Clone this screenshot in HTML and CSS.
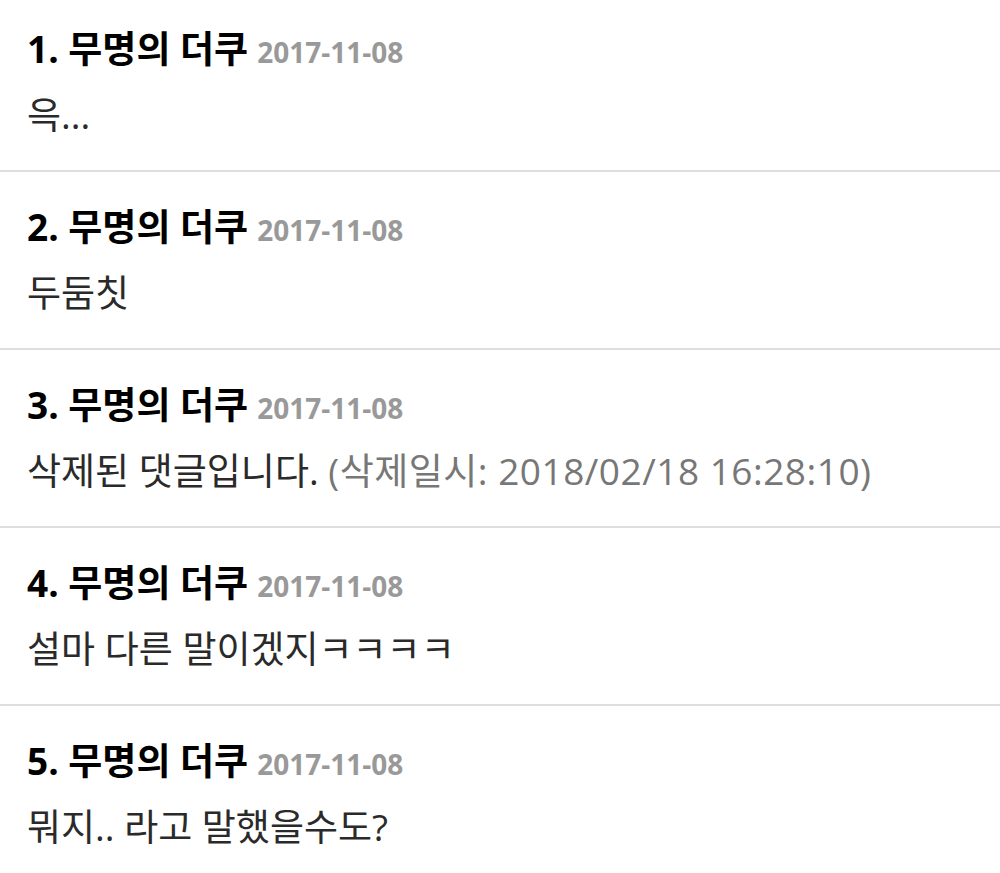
FILE: index.html
```html
<!DOCTYPE html>
<html lang="ko">
<head>
    <meta charset="UTF-8">
    <meta name="viewport" content="width=device-width, initial-scale=1.0">
    <title>댓글</title>
    <link rel="stylesheet" href="styles.css">
</head>
<body>
    <ul class="comments">
        <li class="comment">
            <div class="comment-head"><span class="nick">1. 무명의 더쿠</span><span class="date">2017-11-08</span></div>
            <p class="comment-body">윽...</p>
        </li>
        <li class="comment">
            <div class="comment-head"><span class="nick">2. 무명의 더쿠</span><span class="date">2017-11-08</span></div>
            <p class="comment-body">두둠칫</p>
        </li>
        <li class="comment">
            <div class="comment-head"><span class="nick">3. 무명의 더쿠</span><span class="date">2017-11-08</span></div>
            <p class="comment-body">삭제된 댓글입니다. <span class="deleted">(삭제일시: 2018/02/18 16:28:10)</span></p>
        </li>
        <li class="comment">
            <div class="comment-head"><span class="nick">4. 무명의 더쿠</span><span class="date">2017-11-08</span></div>
            <p class="comment-body">설마 다른 말이겠지ㅋㅋㅋㅋ</p>
        </li>
        <li class="comment">
            <div class="comment-head"><span class="nick">5. 무명의 더쿠</span><span class="date">2017-11-08</span></div>
            <p class="comment-body">뭐지.. 라고 말했을수도?</p>
        </li>
    </ul>
</body>
</html>
```

FILE: styles.css
```css
body {
    margin: 0;
    background-color: #fff;
    font-family: "Open Sans", "Noto Sans CJK KR", sans-serif;
    color: #222;
    overflow: hidden;
}
.comments {
    list-style: none;
    margin: -6px 0 0; /* список немного прокручен */
    padding: 0;
}
.comment {
    padding: 35px 27px 35px;
    border-bottom: 2px solid #dedede;
}
.comment-head {
    display: flex;
    align-items: baseline;
    gap: 9px;
    height: 40px;
    line-height: 40px;
    white-space: nowrap;
}
.nick {
    font-size: 37px;
    font-weight: bold;
    color: #000;
}
.date {
    font-size: 28px;
    font-weight: bold;
    color: #999;
}
.comment-body {
    margin: 26px 0 0;
    height: 40px;
    font-size: 37px;
    line-height: 40px;
    color: #2a2a2a;
    white-space: nowrap;
}
.deleted {
    color: #777;
    letter-spacing: 0.5px;
}
```
